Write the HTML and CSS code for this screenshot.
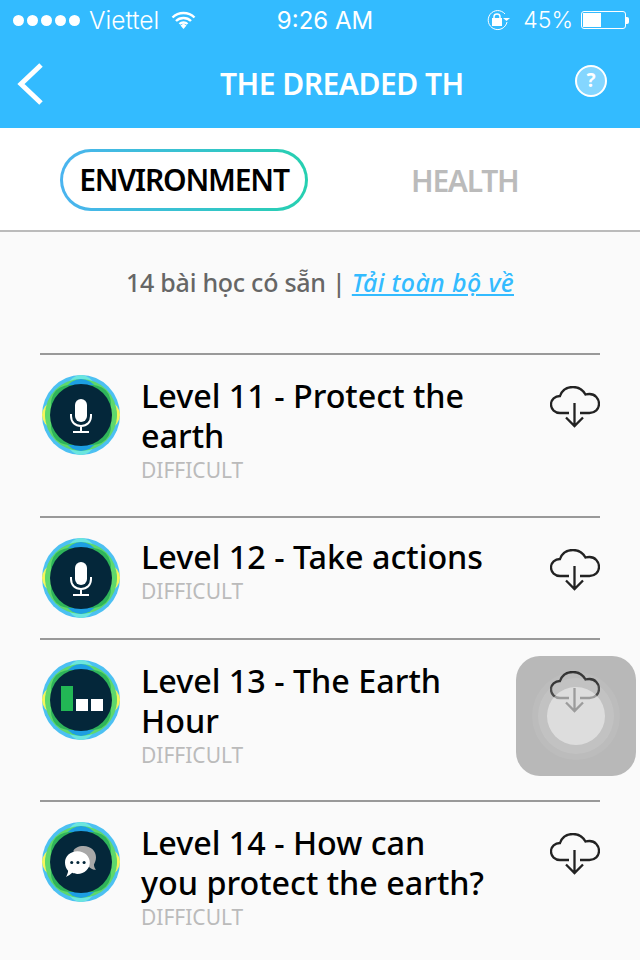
FILE: index.html
```html
<!DOCTYPE html>
<html lang="en">
<head>
    <meta charset="UTF-8">
    <meta name="viewport" content="width=device-width, initial-scale=1.0">
    <title>The Dreaded TH</title>
    <link rel="stylesheet" href="styles.css">
</head>
<body>
    <svg class="defs" width="0" height="0">
        <symbol id="badge" viewBox="0 0 78 80">
            <ellipse cx="39" cy="40" rx="39" ry="40" fill="#4cc0f2"/>
            <ellipse cx="39" cy="40" rx="39" ry="22" fill="#f6f65c"/>
            <ellipse cx="39" cy="40" rx="22" ry="40" fill="#6be6de"/>
            <ellipse cx="39" cy="40" rx="36" ry="36" fill="#5ed86c"/>
            <ellipse cx="39" cy="40" rx="36" ry="22" fill="#5ed86c"/>
            <ellipse cx="39" cy="40" rx="24" ry="36" fill="#1d9fe2"/>
            <ellipse cx="39" cy="40" rx="35" ry="24" transform="rotate(45 39 40)" fill="#2fb45a"/>
            <ellipse cx="39" cy="40" rx="35" ry="24" transform="rotate(-45 39 40)" fill="#2fb45a"/>
            <circle cx="39" cy="40" r="31" fill="#04273a"/>
        </symbol>
        <symbol id="cloud" viewBox="0 0 50 42">
            <path d="M19 27H10C5 27 1 23.500 1 18.500C1 13.500 5 10 10 10C12 4 17 1 23 1C29 1 33 4 35.500 8.500C37 8 38 8 39.500 8C45 8 49 12.500 49 18C49 23 45 27 39.500 27H30" fill="none" stroke="#222" stroke-width="2.300"/>
            <path d="M24.500 17V40M16 31.500L24.500 40L33 31.500" fill="none" stroke="#222" stroke-width="2.300"/>
        </symbol>
        <symbol id="mic" viewBox="0 0 24 34">
            <rect x="6" y="0" width="12" height="23" rx="6" fill="#fff"/>
            <path d="M2 15V17C2 23 6 27 12 27C18 27 22 23 22 17V15M12 27V32M4 33H20" fill="none" stroke="#fff" stroke-width="2"/>
        </symbol>
    </svg>

    <header class="topbar">
        <div class="status">
            <div class="status-left">
                <span class="dots"><i></i><i></i><i></i><i></i><i></i></span>
                <span class="carrier">Viettel</span>
                <svg class="wifi" width="25" height="18" viewBox="0 0 25 18">
                    <path d="M1.500 6.500C7.500 0.500 17.500 0.500 23.500 6.500M5 10C9 6 16 6 20 10M8.500 13C10.500 11 14.500 11 16.500 13" fill="none" stroke="#fff" stroke-width="2.400"/>
                    <path d="M9.500 14.500L12.500 12.500L15.500 14.500L12.500 18Z" fill="#fff"/>
                </svg>
            </div>
            <div class="clock">9:26 AM</div>
            <div class="status-right">
                <svg class="lock" width="24" height="22" viewBox="0 0 24 22">
                    <path d="M21 13A9.500 9.500 0 1 1 19 5" fill="none" stroke="#fff" stroke-width="1"/>
                    <path d="M17 9H24L20.500 12Z" fill="#fff"/>
                    <rect x="6" y="9" width="10" height="8" fill="#fff"/>
                    <path d="M8 9V7.500C8 4 14 4 14 7.500V9" fill="none" stroke="#fff" stroke-width="1.500"/>
                </svg>
                <span class="percent">45%</span>
                <span class="battery"><span class="battery-fill"></span></span>
                <span class="battery-tip"></span>
            </div>
        </div>
        <div class="navbar">
            <svg class="back" width="28" height="44" viewBox="0 0 28 44">
                <path d="M25 3L5 22L25 41" fill="none" stroke="#fff" stroke-width="5"/>
            </svg>
            <h1 class="title">THE DREADED TH</h1>
            <span class="help">?</span>
        </div>
    </header>

    <nav class="tabs">
        <a class="tab tab-active">ENVIRONMENT</a>
        <a class="tab">HEALTH</a>
    </nav>

    <main class="content">
        <p class="summary">14 bài học có sẵn | <a class="download-all">Tải toàn bộ về</a></p>

        <ul class="lessons">
            <li class="lesson">
                <span class="badge">
                    <svg class="badge-bg"><use href="#badge"/></svg>
                    <svg class="badge-mic"><use href="#mic"/></svg>
                </span>
                <div class="lesson-text">
                    <div class="lesson-name">Level 11 - Protect the<br>earth</div>
                    <div class="lesson-level">DIFFICULT</div>
                </div>
                <svg class="cloud"><use href="#cloud"/></svg>
            </li>
            <li class="lesson">
                <span class="badge">
                    <svg class="badge-bg"><use href="#badge"/></svg>
                    <svg class="badge-mic"><use href="#mic"/></svg>
                </span>
                <div class="lesson-text">
                    <div class="lesson-name">Level 12 - Take actions</div>
                    <div class="lesson-level">DIFFICULT</div>
                </div>
                <svg class="cloud"><use href="#cloud"/></svg>
            </li>
            <li class="lesson">
                <span class="badge">
                    <svg class="badge-bg"><use href="#badge"/></svg>
                    <span class="badge-bars"><i class="bar-tall"></i><i></i><i></i></span>
                </span>
                <div class="lesson-text">
                    <div class="lesson-name">Level 13 - The Earth<br>Hour</div>
                    <div class="lesson-level">DIFFICULT</div>
                </div>
                <svg class="cloud"><use href="#cloud"/></svg>
            </li>
            <li class="lesson">
                <span class="badge">
                    <svg class="badge-bg"><use href="#badge"/></svg>
                    <svg class="badge-chat" viewBox="0 0 30 30">
                        <path d="M8 5C9 2 13 0 18 0C25 0 30 5 30 11C30 14 29 16 28 18C28 20 29 22 30 23C27 23 25 22 23 20Z" fill="#a8a8a8"/>
                        <path d="M12 5C19 5 24 10 24 16C24 22 19 27 12 27C10 27 9 27 7 26C5 28 3 29 1 30C2 28 3 26 3 24C1 22 0 19 0 16C0 10 5 5 12 5Z" fill="#fff"/>
                        <circle cx="6.500" cy="16" r="1.500" fill="#04273a"/>
                        <circle cx="12.500" cy="16" r="1.500" fill="#04273a"/>
                        <circle cx="18.500" cy="16" r="1.500" fill="#04273a"/>
                    </svg>
                </span>
                <div class="lesson-text">
                    <div class="lesson-name">Level 14 - How can<br>you protect the earth?</div>
                    <div class="lesson-level">DIFFICULT</div>
                </div>
                <svg class="cloud"><use href="#cloud"/></svg>
            </li>
        </ul>
    </main>

    <div class="touch">
        <span class="touch-ring-a"></span>
        <span class="touch-ring-b"></span>
        <span class="touch-ring-c"></span>
    </div>
</body>
</html>
```

FILE: styles.css
```css
html, body {
    margin: 0;
    padding: 0;
    height: 960px;
    overflow: hidden;
}
body {
    position: relative;
    font-family: "Noto Sans", "Open Sans", sans-serif;
    background-color: #fafafa;
    color: #000;
}
.defs {
    display: block;
    height: 0;
}

/* top bar */
.topbar {
    height: 128px;
    background-color: #33bbff;
    color: #fff;
}
.status {
    height: 40px;
    display: grid;
    grid-template-columns: 1fr auto 1fr;
    align-items: center;
    padding: 0 11px 0 13px;
    font-family: Inter, "Liberation Sans", sans-serif;
    font-size: 22px;
    font-weight: 300;
}
.status-left, .status-right {
    display: flex;
    align-items: center;
}
.status-right {
    justify-content: flex-end;
}
.dots {
    display: flex;
    gap: 3px;
}
.dots i {
    width: 11px;
    height: 11px;
    border-radius: 50%;
    background: #fff;
}
.carrier {
    margin-left: 9px;
    font-size: 24.5px;
}
.wifi {
    margin-left: 12px;
}
.clock {
    margin-left: 8px;
    font-size: 24px;
    font-weight: 400;
}
.percent {
    margin-left: 13px;
    font-size: 23px;
}
.battery {
    margin-left: 8px;
    width: 45px;
    height: 18px;
    box-sizing: border-box;
    border: 1px solid #fff;
    border-radius: 3px;
    padding: 1px;
}
.battery-fill {
    display: block;
    width: 18px;
    height: 14px;
    background: #fff;
}
.battery-tip {
    width: 3px;
    height: 7px;
    background: #fff;
    border-radius: 0 2px 2px 0;
}
.navbar {
    height: 88px;
    display: flex;
    align-items: center;
    padding: 0 33px 0 16px;
}
.back {
    flex: none;
}
.title {
    margin: 0 0 0 176px;
    font-size: 30px;
    font-weight: 600;
    letter-spacing: -0.5px;
    line-height: 88px;
    white-space: nowrap;
}
.help {
    margin-left: auto;
    margin-top: -6px;
    width: 32px;
    height: 32px;
    box-sizing: border-box;
    border: 2px solid #fff;
    border-radius: 50%;
    background: rgba(255, 255, 255, 0.4);
    font-size: 19px;
    font-weight: 700;
    line-height: 27px;
    text-align: center;
}

/* tabs */
.tabs {
    height: 104px;
    box-sizing: border-box;
    display: flex;
    align-items: center;
    padding: 2px 0 0 60px;
    background: #fff;
    border-bottom: 2px solid #bbb;
}
.tab {
    font-size: 30px;
    font-weight: 600;
    letter-spacing: -1.3px;
    color: #bbb;
    margin-left: 103px;
}
.tab-active {
    margin-left: 0;
    width: 248px;
    height: 62px;
    box-sizing: border-box;
    border: 3px solid transparent;
    border-radius: 31px;
    background: linear-gradient(#fff, #fff) padding-box, linear-gradient(90deg, #4ab4f0, #26d0b0) border-box;
    color: #000;
    letter-spacing: -1.2px;
    line-height: 55px;
    text-align: center;
}

/* lesson list */
.content {
    padding: 0 40px;
}
.summary {
    margin: 0 0 32px;
    padding-top: 32px;
    height: 89px;
    box-sizing: border-box;
    text-align: center;
    font-size: 25px;
    line-height: 36px;
    font-weight: 500;
    letter-spacing: -0.25px;
    color: #666;
}
.download-all {
    color: #33bbff;
    font-style: italic;
    letter-spacing: 0.35px;
    text-decoration: underline;
}
.lessons {
    list-style: none;
    margin: 0;
    padding: 0;
}
.lesson {
    display: flex;
    align-items: flex-start;
    padding: 21px 0 31px;
    border-top: 2px solid #999;
}
.lesson:nth-child(1) {
    padding-bottom: 32px;
}
.lesson:nth-child(2) {
    padding-bottom: 20px;
}
.lesson:nth-child(2) .lesson-text {
    margin-top: -3px;
}
.badge {
    position: relative;
    flex: none;
    width: 78px;
    height: 80px;
    margin: -1px 21px 0 2px;
}
.badge-bg {
    display: block;
    width: 78px;
    height: 80px;
}
.badge-mic {
    position: absolute;
    left: 27px;
    top: 24px;
    width: 24px;
    height: 34px;
}
.badge-bars {
    position: absolute;
    left: 19px;
    top: 26px;
    display: flex;
    align-items: flex-end;
    gap: 3px;
}
.badge-bars i {
    width: 12px;
    height: 12px;
    background: #fff;
}
.badge-bars .bar-tall {
    width: 12px;
    height: 25px;
    background: #22b755;
}
.badge-chat {
    position: absolute;
    left: 23px;
    top: 24px;
    width: 31px;
    height: 31px;
}
.lesson-text {
    flex: 1;
    min-width: 0;
    margin-top: -1px;
}
.lesson-name {
    font-size: 32.3px;
    font-weight: 500;
    line-height: 40px;
}
.lesson-level {
    margin-top: 1px;
    font-size: 21px;
    line-height: 28px;
    color: #bbb;
}
.cloud {
    flex: none;
    width: 50px;
    height: 42px;
    margin-top: 10px;
}

/* assistive touch */
.touch {
    position: absolute;
    left: 516px;
    top: 656px;
    width: 120px;
    height: 120px;
    border-radius: 24px;
    background: rgba(60, 60, 60, 0.35);
}
.touch span {
    position: absolute;
    border-radius: 50%;
}
.touch-ring-a {
    left: 16px;
    top: 16px;
    width: 88px;
    height: 88px;
    background: rgba(255, 255, 255, 0.06);
}
.touch-ring-b {
    left: 22px;
    top: 22px;
    width: 76px;
    height: 76px;
    background: rgba(255, 255, 255, 0.1);
}
.touch-ring-c {
    left: 31px;
    top: 31px;
    width: 58px;
    height: 58px;
    background: rgba(255, 255, 255, 0.45);
}
```
